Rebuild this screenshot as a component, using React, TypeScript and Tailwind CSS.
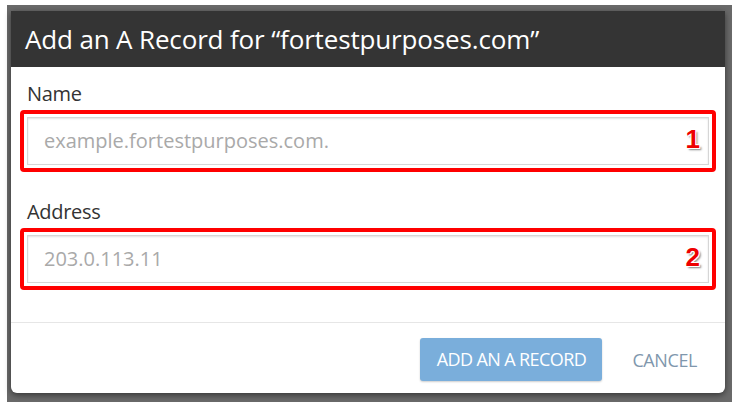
import React from "react";

const font = { fontFamily: '"Open Sans", "Noto Sans", sans-serif' };

function Field({ label, placeholder, num, labelTop }: { label: string; placeholder: string; num: string; labelTop: string }) {
  return (
    <div className={labelTop}>
      <div className="pl-[16px] text-[20px] leading-[24px] text-[#333] mb-[4px] tracking-[-0.3px]">{label}</div>
      <div className="relative mx-[9px] h-[62px] rounded-[4px] border-[4px] border-[#f00] p-[3px]">
        <div className="h-full border border-[#d6d6d6] bg-white shadow-[inset_0_1px_2px_rgba(0,0,0,0.12)] flex items-center pl-[16px] text-[20px] text-[#a9a9a9]">
          {placeholder}
        </div>
        <span className="absolute right-[12px] top-[12px] text-[26px] leading-[26px] font-bold text-[#e00] [text-shadow:1px_1px_0_#fff,-1px_-1px_0_#fff,1px_-1px_0_#fff,-1px_1px_0_#fff,2px_2px_2px_rgba(0,0,0,0.5)]" style={{ fontFamily: '"Liberation Sans", Arial, sans-serif' }}>
          {num}
        </span>
      </div>
    </div>
  );
}

export default function App() {
  return (
    <div className="w-[737px] h-[408px] bg-white pt-[5px] pl-[7px] pr-[5px] pb-[6px]" style={font}>
      <div className="h-full bg-[#6a6a6a] pt-[6px] pl-[4px] pr-[7px] pb-[9px]">
        <div className="h-full bg-white rounded-b-[6px] shadow-[0_2px_6px_rgba(0,0,0,0.5)] flex flex-col overflow-hidden">
          <div className="h-[56px] bg-[#343434] flex items-center pl-[14px] text-white text-[26px] tracking-[-0.15px]">
            Add an A Record for “fortestpurposes.com”
          </div>
          <div className="flex-1 flex flex-col">
            <Field label="Name" placeholder="example.fortestpurposes.com." num="1" labelTop="pt-[15px]" />
            <Field label="Address" placeholder="203.0.113.11" num="2" labelTop="pt-[28px]" />
            <div className="flex-1" />
            <div className="border-t border-[#e6e6e6] h-[71px] flex items-start justify-end pt-[15px] pr-[28px]">
              <button className="h-[43px] w-[182px] rounded-[3px] bg-[#7aaedb] text-white text-[18px] tracking-[-0.6px] shadow-[0_1px_2px_rgba(0,0,0,0.2)]">
                ADD AN A RECORD
              </button>
              <span className="ml-[30px] mt-[9px] text-[18px] text-[#7f97ad] tracking-[-0.4px]">CANCEL</span>
            </div>
          </div>
        </div>
      </div>
    </div>
  );
}
